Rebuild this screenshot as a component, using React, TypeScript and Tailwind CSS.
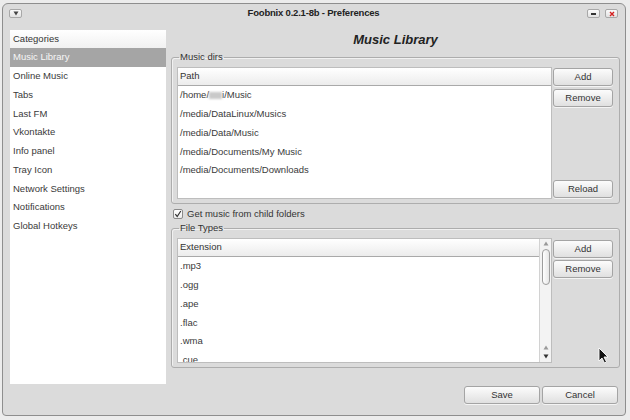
import React from "react";

const font = { fontFamily: '"Liberation Sans", Arial, sans-serif' };

function Btn({ label, className = "" }: { label: string; className?: string }) {
  return (
    <div
      className={`h-[18px] flex items-center justify-center rounded-[3px] border border-[#a4a4a4] bg-gradient-to-b from-[#fcfcfc] to-[#e0e0e0] shadow-[0_1px_0_rgba(255,255,255,0.7)] text-[9.5px] text-[#333] ${className}`}
    >
      {label}
    </div>
  );
}

function Header({ label }: { label: string }) {
  return (
    <div className="h-[18px] shrink-0 flex items-center pl-[2px] border-b border-[#a9a9a9] bg-gradient-to-b from-[#ffffff] to-[#ececec] text-[9.5px] text-[#333]">
      {label}
    </div>
  );
}

function Row({ children }: { children: React.ReactNode }) {
  return (
    <div className="h-[18.75px] shrink-0 flex items-center pl-[2px] text-[9.5px] text-[#3a3a3a]">
      {children}
    </div>
  );
}

function Tri({ up, color }: { up?: boolean; color: string }) {
  return (
    <svg width="6" height="5" viewBox="0 0 6 5">
      <path d={up ? "M3 0.5L5.5 4.5H0.5Z" : "M0.5 0.5H5.5L3 4.5Z"} fill={color} />
    </svg>
  );
}

export default function App() {
  const categories = [
    "Online Music",
    "Tabs",
    "Last FM",
    "Vkontakte",
    "Info panel",
    "Tray Icon",
    "Network Settings",
    "Notifications",
    "Global Hotkeys",
  ];
  const dirs = [
    "/media/DataLinux/Musics",
    "/media/Data/Music",
    "/media/Documents/My Music",
    "/media/Documents/Downloads",
  ];
  const exts = [".mp3", ".ogg", ".ape", ".flac", ".wma", ".cue"];

  return (
    <div className="relative w-[630px] h-[420px] overflow-hidden bg-[#ececec] pt-[3px] pl-[2px]" style={font}>
      <div className="w-[624px] h-[413px] flex flex-col bg-[#dbdbdb] border border-[#8e8e8e] rounded-t-[6px] rounded-b-[4px]">
        {/* title bar */}
        <div className="h-[19px] shrink-0 grid grid-cols-[1fr_auto_1fr] items-center pl-[6px] pr-[7px]">
          <div className="flex">
            <div className="w-[13px] h-[9px] flex items-center justify-center rounded-[2px] border border-[#a8a8a8] bg-gradient-to-b from-[#fafafa] to-[#e2e2e2]">
              <Tri color="#444" />
            </div>
          </div>
          <div className="text-[9.5px] font-bold tracking-[-0.2px] text-[#222]">Foobnix 0.2.1-8b - Preferences</div>
          <div className="flex justify-end gap-[5px]">
            <div className="w-[13px] h-[9px] flex items-center justify-center rounded-[2px] border border-[#a8a8a8] bg-gradient-to-b from-[#fafafa] to-[#e2e2e2]">
              <div className="w-[5px] h-[2px] bg-[#333]" />
            </div>
            <div className="w-[13px] h-[9px] flex items-center justify-center rounded-[2px] border border-[#a8a8a8] bg-gradient-to-b from-[#fafafa] to-[#e2e2e2]">
              <svg width="6" height="6" viewBox="0 0 6 6">
                <path d="M1 1L5 5M5 1L1 5" stroke="#d42020" strokeWidth="1.4" />
              </svg>
            </div>
          </div>
        </div>

        {/* body */}
        <div className="flex pl-[7px] pt-[7px]">
          {/* categories */}
          <div className="w-[156px] h-[354px] shrink-0 flex flex-col bg-white">
            <div className="h-[18px] flex items-center pl-[3px] bg-gradient-to-b from-[#ffffff] to-[#f1f1f1] text-[9.5px] text-[#333]">
              Categories
            </div>
            <div className="h-[18.75px] flex items-center pl-[3px] bg-[#a5a5a5] text-[9.5px] text-[#f6f6f6]">
              Music Library
            </div>
            {categories.map((c) => (
              <div key={c} className="h-[18.75px] flex items-center pl-[3px] text-[9.5px] text-[#3a3a3a]">
                {c}
              </div>
            ))}
          </div>

          {/* right side */}
          <div className="ml-[5px] w-[449px] flex flex-col">
            <div className="h-[20px] flex items-center justify-center text-[13px] font-bold italic text-[#222]">
              Music Library
            </div>

            <fieldset className="mt-[1px] border border-[#adadad] rounded-[3px] pl-[5px] pr-[6px] pt-[4px] pb-[4px] shadow-[inset_1px_1px_0_rgba(255,255,255,0.6)]">
              <legend className="ml-[2px] px-[1px] text-[9.5px] leading-[12px] text-[#333]">Music dirs</legend>
              <div className="flex h-[132px]">
                <div className="w-[375px] flex flex-col bg-white border border-[#bdbdbd] overflow-hidden">
                  <Header label="Path" />
                  <Row>
                    /home/
                    <span className="inline-block w-[13px] h-[7px] bg-[#c9c9c9] blur-[1px]" />
                    i/Music
                  </Row>
                  {dirs.map((d) => (
                    <Row key={d}>{d}</Row>
                  ))}
                </div>
                <div className="ml-[1px] w-[60px] flex flex-col">
                  <Btn label="Add" className="mt-[1px]" />
                  <Btn label="Remove" className="mt-[3px]" />
                  <div className="flex-1" />
                  <Btn label="Reload" className="mb-[1px]" />
                </div>
              </div>
            </fieldset>

            <div className="mt-[4px] h-[12px] flex items-center gap-[4px]">
              <div className="ml-[2px] w-[10px] h-[10px] flex items-center justify-center rounded-[2px] border border-[#8a8a8a] bg-gradient-to-b from-[#ffffff] to-[#ececec]">
                <svg width="8" height="8" viewBox="0 0 8 8">
                  <path d="M1.3 4.2L3.2 6.5L6.8 1" stroke="#333" strokeWidth="1.2" fill="none" />
                </svg>
              </div>
              <span className="text-[9.5px] text-[#333]">Get music from child folders</span>
            </div>

            <fieldset className="mt-[2px] border border-[#adadad] rounded-[3px] pl-[5px] pr-[6px] pt-[4px] pb-[4px] shadow-[inset_1px_1px_0_rgba(255,255,255,0.6)]">
              <legend className="ml-[2px] px-[1px] text-[9.5px] leading-[12px] text-[#333]">File Types</legend>
              <div className="flex h-[125px]">
                <div className="w-[375px] flex bg-white border border-[#bdbdbd] overflow-hidden">
                  <div className="flex-1 flex flex-col overflow-hidden">
                    <Header label="Extension" />
                    {exts.map((e) => (
                      <Row key={e}>{e}</Row>
                    ))}
                  </div>
                  <div className="w-[12px] flex flex-col items-center bg-[#f3f3f3] border-l border-[#d2d2d2]">
                    <div className="mt-[2px]">
                      <Tri up color="#9a9a9a" />
                    </div>
                    <div className="mt-[3px] w-[8px] h-[36px] rounded-full border border-[#9d9d9d] bg-gradient-to-r from-[#ffffff] to-[#e6e6e6]" />
                    <div className="flex-1" />
                    <Tri up color="#9a9a9a" />
                    <div className="mt-[4px] mb-[3px]">
                      <Tri color="#333" />
                    </div>
                  </div>
                </div>
                <div className="ml-[1px] w-[60px] flex flex-col">
                  <Btn label="Add" className="mt-[2px]" />
                  <Btn label="Remove" className="mt-[2px]" />
                </div>
              </div>
            </fieldset>

            <div className="mt-[18px] flex justify-end gap-[2px] pr-[2px]">
              <Btn label="Save" className="w-[76px]" />
              <Btn label="Cancel" className="w-[76px]" />
            </div>
          </div>
        </div>
      </div>

      {/* mouse pointer */}
      <svg className="absolute left-[598px] top-[347px]" width="12" height="17" viewBox="0 0 12 17">
        <path d="M1 1V14L4 11L6.5 16L8.5 15L6 10H10Z" fill="#111" stroke="#fff" strokeWidth="0.9" />
      </svg>
    </div>
  );
}
